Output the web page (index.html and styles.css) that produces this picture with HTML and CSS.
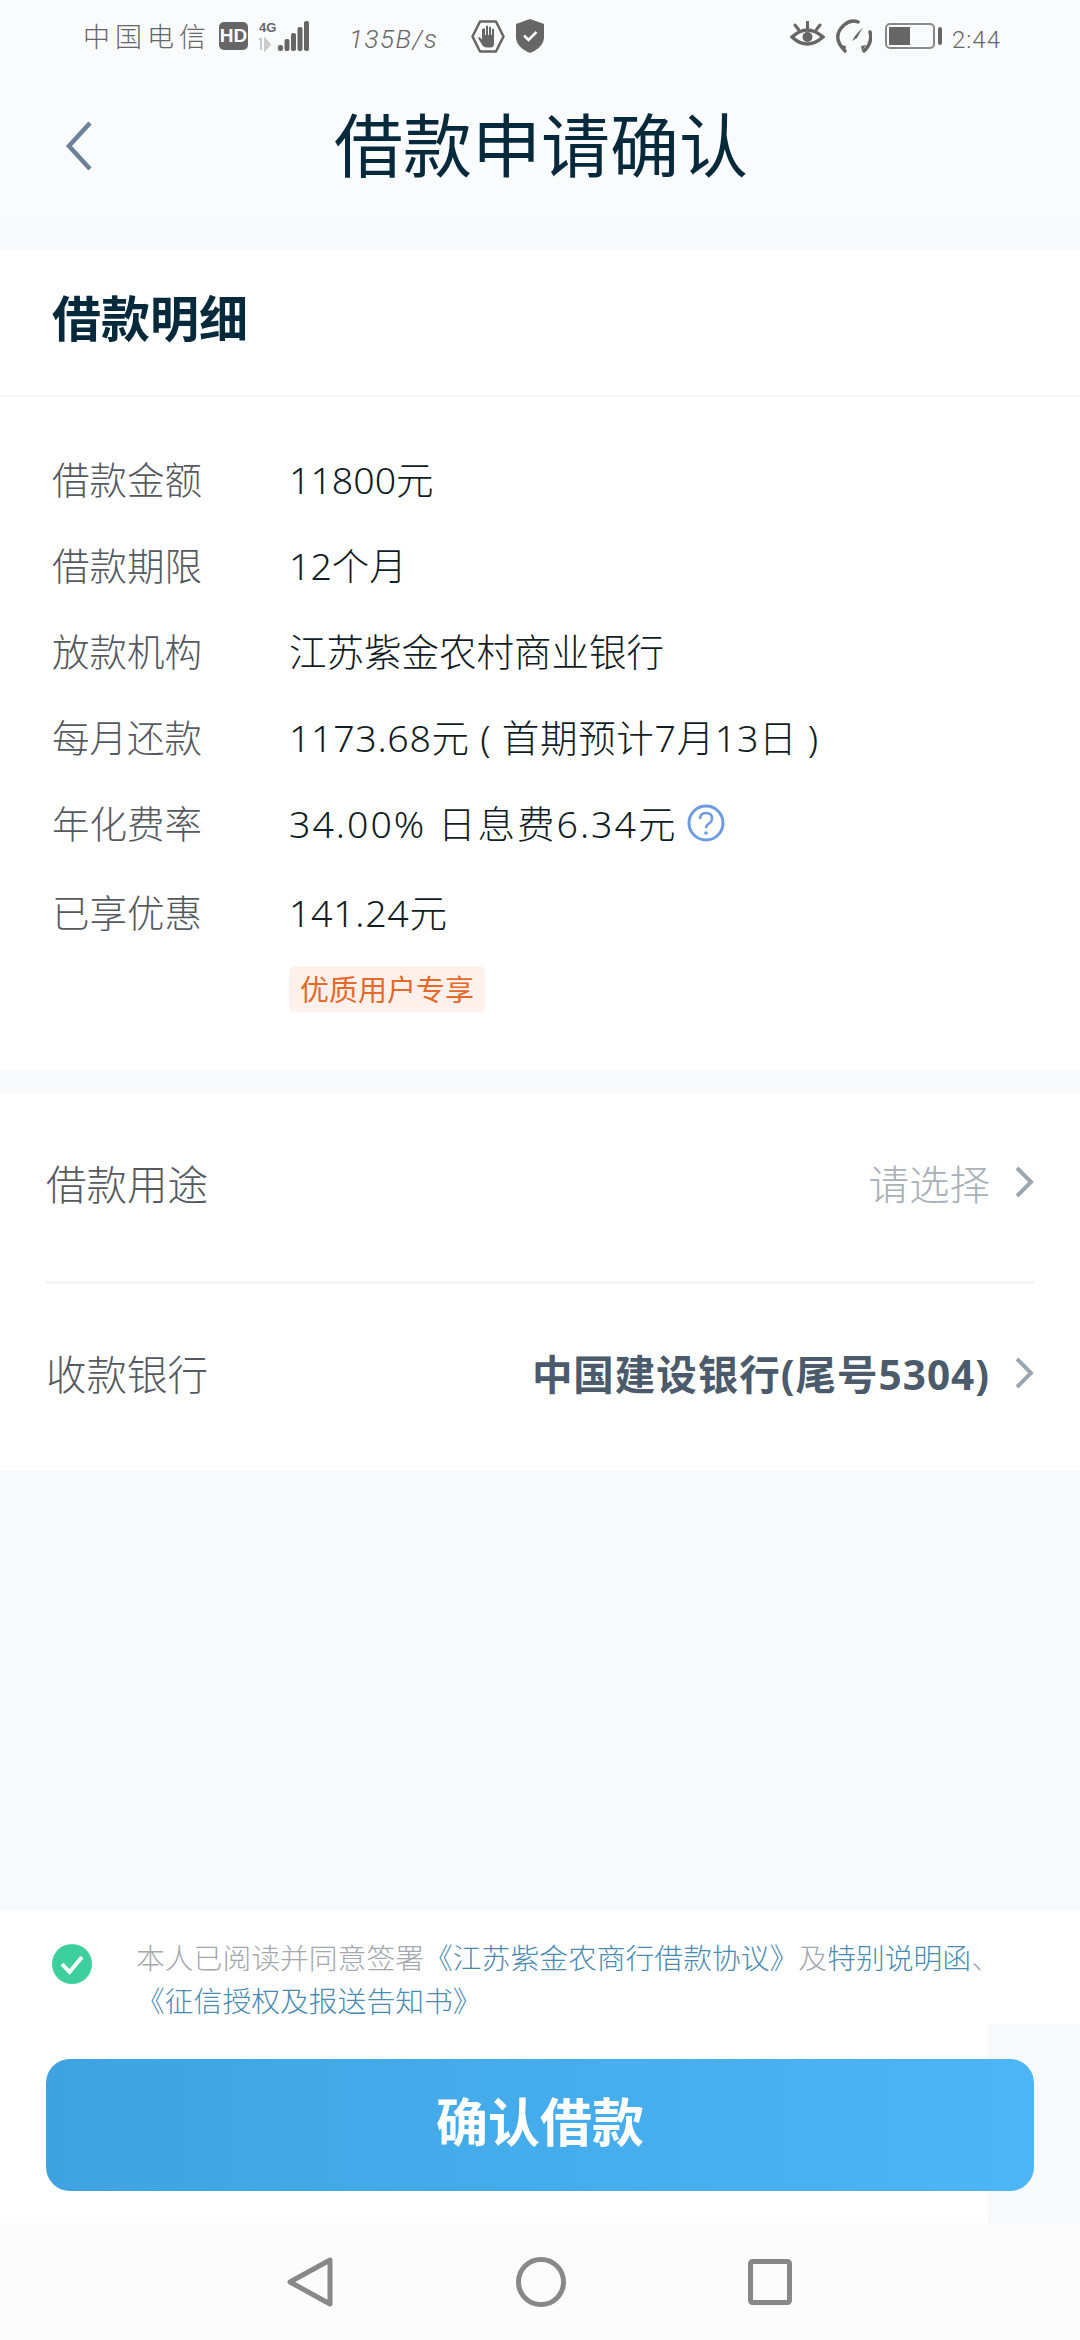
FILE: index.html

```html
<!DOCTYPE html>
<html lang="zh-CN">
<head>
    <meta charset="UTF-8">
    <meta name="viewport" content="width=device-width, initial-scale=1.0">
    <title>借款申请确认</title>
    <link rel="stylesheet" href="styles.css">
</head>
<body>

<div class="status-bar">
    <div class="status-group">
        <span class="carrier">中国电信</span>
        <span class="hd">HD</span>
        <svg class="signal" width="52" height="32" viewBox="0 0 52 32">
            <text x="1" y="12" class="signal-type">4G</text>
            <path d="M3 18v12M1 20l2-2M7 19v11l5-5.500-5-5.500z" fill="#ccc" stroke="#ccc" stroke-width="2"/>
            <g fill="#666">
                <rect x="20" y="25" width="5" height="6" rx="2"/>
                <rect x="26.500" y="19" width="5" height="12" rx="2"/>
                <rect x="33" y="13" width="5" height="18" rx="2"/>
                <rect x="39.500" y="7" width="5" height="24" rx="2"/>
                <rect x="46" y="1" width="5" height="30" rx="2"/>
            </g>
        </svg>
        <span class="net-speed">135B/s</span>
        <svg class="hand" width="34" height="33" viewBox="0 0 34 33">
            <path d="M1.500 16.500L9 1.500h16l7.500 15-7.500 15H9z" fill="none" stroke="#666" stroke-width="2.500" stroke-linejoin="round"/>
            <path d="M11 9.500v10l-2.500-2.500-1.500 1 4.500 7.500q1.500 2 4 2h4q3.500 0 3.500-4V9.500a1 1 0 0 0-2 0V15h-1V7.500a1 1 0 0 0-2 0V15h-1V6.500a1 1 0 0 0-2 0V15h-1V9.500a1 1 0 0 0-2.500 0z" fill="#666"/>
        </svg>
        <svg class="shield" width="28" height="34" viewBox="0 0 28 34">
            <path d="M14 0l14 5v13q0 10-14 16Q0 28 0 18V5z" fill="#666"/>
            <path d="M8 16.500l4.500 4.500 8-8" fill="none" stroke="#fff" stroke-width="2.500"/>
        </svg>
    </div>
    <div class="status-group">
        <svg class="eye" width="35" height="28" viewBox="0 0 35 28">
            <path d="M2 16q15-14 31 0-16 14-31 0z" fill="none" stroke="#666" stroke-width="3.500"/>
            <circle cx="17.500" cy="16" r="5" fill="#666"/>
            <path d="M17.500 1v6M5 4l3.500 4.500M30 4l-3.500 4.500" stroke="#666" stroke-width="3" stroke-linecap="round"/>
        </svg>
        <svg class="gauge" width="37" height="34" viewBox="0 0 37 34">
            <path d="M10 32Q-4 18 9 6q7-6 14-3" fill="none" stroke="#666" stroke-width="3.500" stroke-linecap="round"/>
            <path d="M35 13q3 10-6 19" fill="none" stroke="#666" stroke-width="3.500" stroke-linecap="round"/>
            <path d="M6 26l5 1-1 5zM31 26l-5 1 1 5z" fill="#666"/>
            <path d="M28 8l-8 9-3 5 5-3z" fill="#666"/>
        </svg>
        <div class="battery">
            <div class="battery-body"><div class="battery-level"></div></div>
            <div class="battery-nib"></div>
        </div>
        <span class="clock">2:44</span>
    </div>
</div>

<div class="title-bar">
    <svg class="back" width="28" height="50" viewBox="0 0 28 50">
        <path d="M25 2L4 25l21 23" fill="none" stroke="#6b8299" stroke-width="4.500"/>
    </svg>
    <h1 class="title">借款申请确认</h1>
</div>

<div class="band"></div>

<section class="card">
    <h2 class="card-title">借款明细</h2>
    <div class="detail-list">
        <div class="label">借款金额</div>
        <div class="value">11800元</div>
        <div class="label">借款期限</div>
        <div class="value">12个月</div>
        <div class="label">放款机构</div>
        <div class="value">江苏紫金农村商业银行</div>
        <div class="label">每月还款</div>
        <div class="value spaced">1173.68元 ( 首期预计7月13日 )</div>
        <div class="label">年化费率</div>
        <div class="value spaced-wide"><span>34.00% 日息费6.34元</span>
            <svg class="help" width="38" height="38" viewBox="0 0 38 38">
                <circle cx="19" cy="19" r="17" fill="none" stroke="#6f9be0" stroke-width="3"/>
                <path d="M13 15q0-6 6-6t6 5.500q0 3-3 5t-3 4.500" fill="none" stroke="#6f9be0" stroke-width="2.500"/>
                <circle cx="19" cy="29" r="1.800" fill="#6f9be0"/>
            </svg>
        </div>
        <div class="label label-tall">已享优惠</div>
        <div class="value label-tall spaced">141.24元</div>
        <div class="tag">优质用户专享</div>
    </div>
</section>

<section class="card choices">
    <div class="choice">
        <span class="choice-label">借款用途</span>
        <span class="choice-value placeholder">请选择</span>
        <svg class="arrow" width="20" height="32" viewBox="0 0 20 32">
            <path d="M3 2l14 14L3 30" fill="none" stroke="#9aa6b0" stroke-width="4"/>
        </svg>
    </div>
    <div class="choice">
        <span class="choice-label">收款银行</span>
        <span class="choice-value bank">中国建设银行(尾号5304)</span>
        <svg class="arrow" width="20" height="32" viewBox="0 0 20 32">
            <path d="M3 2l14 14L3 30" fill="none" stroke="#9aa6b0" stroke-width="4"/>
        </svg>
    </div>
</section>

<div class="spacer"></div>

<div class="confirm">
    <div class="side-patch"></div>
    <div class="agree">
        <svg class="check" width="40" height="40" viewBox="0 0 40 40">
            <circle cx="20" cy="20" r="20" fill="#3dcf9e"/>
            <path d="M10 20l7.500 8L30 13" fill="none" stroke="#fff" stroke-width="4"/>
        </svg>
        <p class="agree-text">本人已阅读并同意签署<a class="link">《江苏紫金农商行借款协议》</a>及<a class="link">特别说明函</a>、<br><a class="link">《征信授权及报送告知书》</a></p>
    </div>
    <div class="submit">确认借款</div>
</div>

<div class="nav-bar">
    <svg width="48" height="52" viewBox="0 0 48 52">
        <path d="M44 4v44L4 26z" fill="none" stroke="#888" stroke-width="5" stroke-linejoin="round"/>
    </svg>
    <svg width="50" height="50" viewBox="0 0 50 50">
        <circle cx="25" cy="25" r="22.500" fill="none" stroke="#888" stroke-width="5"/>
    </svg>
    <svg width="44" height="46" viewBox="0 0 44 46">
        <rect x="2.500" y="2.500" width="39" height="41" rx="2" fill="none" stroke="#888" stroke-width="5"/>
    </svg>
</div>

</body>
</html>
```

FILE: styles.css

```css
*{
    margin:0;
    padding:0;
    box-sizing:border-box;
}

html{
    font-family: "Noto Sans CJK SC", "Noto Sans", sans-serif;
    --latin: "Noto Sans", "Noto Sans CJK SC", sans-serif;
    --bg:#f8f9fb;
    --bar:#fafbfc;
    --dark:#06293c;
    --grey:#555a60;
    --line:#f5f6f7;
}

body{
    width:1080px;
    height:2340px;
    display:flex;
    flex-direction:column;
    background:var(--bg);
    overflow:hidden;
}

/* status bar */
.status-bar{
    height:70px;
    flex:none;
    display:flex;
    justify-content:space-between;
    align-items:flex-start;
    padding:19px 78px 0 83px;
    background:var(--bar);
    color:#666;
}
.status-group{ display:flex; align-items:flex-start; }
.carrier{ width:127px; font-size:27px; line-height:34px; letter-spacing:5px; font-weight:300; white-space:nowrap; }
.hd{
    width:29px;
    height:28px;
    margin:3px 0 0 9px;
    background:#666;
    border-radius:5px;
    color:#fff;
    font:bold 19px/28px "Liberation Sans", sans-serif;
    text-align:center;
}
.signal{ margin-left:10px; margin-top:1px; }
.signal-type{ font:bold 13px "Liberation Sans", sans-serif; fill:#666; }
.net-speed{
    width:84px;
    margin-left:39px;
    margin-top:4px;
    font:italic 300 26px/32px Roboto, sans-serif;
    letter-spacing:1.500px;
    white-space:nowrap;
}
.hand{ margin-left:38px; margin-top:1px; }
.shield{ margin-left:11px; }
.eye{ margin-top:2px; }
.gauge{ margin-left:10px; }
.battery{ display:flex; align-items:center; margin:4px 0 0 13px; height:26px; }
.battery-body{
    width:50px;
    height:26px;
    border:2px solid #888;
    border-radius:5px;
    padding:2px;
}
.battery-level{ width:21px; height:100%; background:#666; }
.battery-nib{ width:4px; height:18px; margin-left:3px; background:#666; border-radius:2px; }
.clock{
    width:50px;
    margin-left:10px;
    margin-top:5px;
    font:300 24px/32px Roboto, sans-serif;
    letter-spacing:1px;
}

/* title */
.title-bar{
    height:152px;
    flex:none;
    display:grid;
    grid-template-columns:1fr auto 1fr;
    align-items:center;
    padding:0 65px;
    background:var(--bar);
}
.title{
    margin-bottom:8px;
    margin-left:2px;
    font-size:69px;
    line-height:80px;
    font-weight:400;
    color:var(--dark);
}
.band{ height:28px; flex:none; background:var(--bg); }

/* cards */
.card{ background:#fff; flex:none; }
.card-title{
    height:147px;
    padding-left:52px;
    font-size:49px;
    line-height:132px;
    font-weight:700;
    color:var(--dark);
    border-bottom:2px solid var(--line);
}
.detail-list{
    display:grid;
    grid-template-columns:237px 1fr;
    grid-auto-rows:86px;
    align-items:center;
    padding:37px 0 34px 52px;
    font-size:37.500px;
}
.label{ color:var(--grey); font-weight:300; }
.value{
    color:#111d24;
    font-family:var(--latin);
    font-weight:300;
    display:flex;
    align-items:center;
    white-space:pre;
}
.spaced{ letter-spacing:0.700px; }
.spaced-wide{ letter-spacing:2px; }
.help{ margin:4px 0 0 10px; }
.label-tall{ margin-top:6px; }
.tag{
    grid-column:2;
    justify-self:start;
    align-self:start;
    margin-top:16px;
    height:46px;
    padding:0 11px;
    background:#fef1ec;
    border-radius:6px;
    color:#e4692a;
    font-size:29px;
    line-height:44px;
    font-weight:400;
}

.choices{ margin-top:23px; padding:0 46px; }
.choice{
    height:188px;
    display:flex;
    align-items:center;
    font-size:40.500px;
}
.choice + .choice{ height:190px; border-top:3px solid var(--line); }
.choice-label{ color:var(--grey); font-weight:300; flex:1; margin-bottom:10px; }
.choice-value{ margin-bottom:10px; }
.placeholder{ color:#a8b0b8; font-weight:300; }
.bank{ color:#4b5b6b; font-family:var(--latin); font-weight:700; letter-spacing:1px; }
.arrow{ margin:0 0 10px 24px; }

.spacer{ flex:1; }

/* bottom */
.confirm{
    flex:none;
    height:313px;
    position:relative;
    padding:25px 46px 0;
    background:#fff;
}
.side-patch{
    position:absolute;
    right:0;
    bottom:0;
    width:92px;
    height:199px;
    background:var(--bg);
}
.agree{ display:flex; align-items:flex-start; padding-left:6px; }
.check{ margin-top:9px; flex:none; }
.agree-text{
    margin-left:44px;
    font-size:28.800px;
    line-height:43px;
    font-weight:300;
    color:#a3a8ae;
    white-space:nowrap;
}
.link{ color:#4a8cb0; }
.submit{
    position:relative;
    height:132px;
    margin-top:38px;
    border-radius:24px;
    background:linear-gradient(90deg, #3ea3e0, #4db6f7);
    color:#fff;
    font-size:52px;
    line-height:122px;
    font-weight:700;
    text-align:center;
}

.nav-bar{
    height:117px;
    flex:none;
    display:flex;
    justify-content:center;
    align-items:center;
    gap:182px;
    padding-right:3px;
    background:#fcfcfc;
}
```
